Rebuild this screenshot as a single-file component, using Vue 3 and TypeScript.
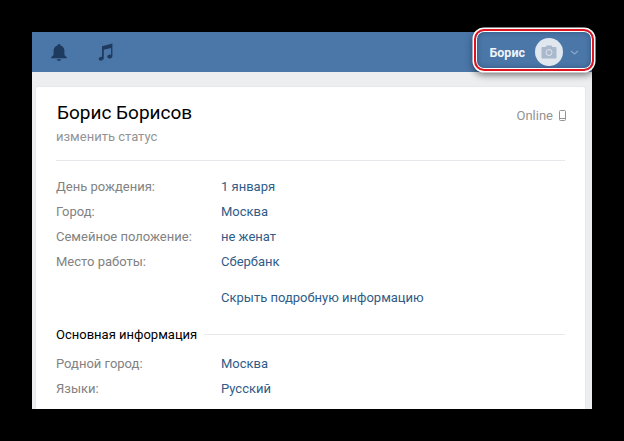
<script setup lang="ts">
const mainRows = [
  { label: 'День рождения:', value: '1 января' },
  { label: 'Город:', value: 'Москва' },
  { label: 'Семейное положение:', value: 'не женат' },
  { label: 'Место работы:', value: 'Сбербанк' },
]
const extraRows = [
  { label: 'Родной город:', value: 'Москва' },
  { label: 'Языки:', value: 'Русский' },
]
</script>

<template>
  <div class="page">
    <div class="window">
      <header class="topbar">
        <svg class="bell" viewBox="0 0 18 18" width="18" height="19">
          <path fill="#1f3a5f" d="M9 0.5c.9 0 1.5.6 1.5 1.4 2.6.6 3.9 2.8 3.9 5.4v3.200c0 1.300 1.100 2.300 2.300 3.100.5.4.3 1.100-.3 1.100H1.600c-.6 0-.8-.7-.3-1.100 1.200-.8 2.300-1.800 2.300-3.100V7.300c0-2.600 1.300-4.800 3.900-5.400C7.500 1.100 8.100.5 9 .5zM6.800 15.800h4.400c-.3 1-1.100 1.600-2.200 1.600s-1.900-.6-2.200-1.600z" />
        </svg>
        <svg class="note" viewBox="0 0 16 18" width="16" height="18">
          <path fill="#1f3a5f" d="M5 3.200 15.400.5v12.400c0 1.500-1.300 2.600-2.900 2.600-1.300 0-2.200-.7-2.200-1.700 0-1.200 1.200-2.200 2.800-2.200.4 0 .7 0 1 .1V5L6.800 6.700v8.300c0 1.500-1.300 2.600-2.900 2.600-1.300 0-2.200-.7-2.200-1.700 0-1.200 1.200-2.200 2.800-2.200.2 0 .4 0 .5.1z" />
        </svg>
        <div class="spacer"></div>
        <div class="user">
          <span class="user-name">Борис</span>
          <span class="avatar">
            <svg viewBox="0 0 16 14" width="16" height="14">
              <path fill="#a9b9cb" d="M1.500 2H4.500L5.600.5h4.800L11.500 2h3c.6 0 1 .4 1 1v9.500c0 .6-.4 1-1 1h-13c-.6 0-1-.4-1-1V3c0-.6.4-1 1-1z" />
              <circle cx="8" cy="7.500" r="3" fill="none" stroke="#dfe6ee" stroke-width="1" />
            </svg>
          </span>
          <svg class="chevron" viewBox="0 0 9 5" width="9" height="5">
            <path d="M1 1l3.500 3L8 1" fill="none" stroke="#8fa9c7" stroke-width="1.200" />
          </svg>
        </div>
      </header>
      <div class="content">
        <main class="card">
          <div class="head">
            <div>
              <h1 class="title">Борис Борисов</h1>
              <div class="status">изменить статус</div>
            </div>
            <div class="online">
              Online
              <svg viewBox="0 0 7 11" width="7" height="11">
                <rect x="0.500" y="0.500" width="6" height="10" rx="1" fill="none" stroke="#939393" />
                <path d="M1 8.500h5" stroke="#939393" />
              </svg>
            </div>
          </div>
          <div class="rows">
            <div v-for="row in mainRows" :key="row.label" class="row">
              <span class="label">{{ row.label }}</span>
              <span class="value">{{ row.value }}</span>
            </div>
          </div>
          <div class="toggle-row">
            <span class="label"></span>
            <span class="value">Скрыть подробную информацию</span>
          </div>
          <div class="section">
            <span class="section-title">Основная информация</span>
            <span class="section-line"></span>
          </div>
          <div class="rows">
            <div v-for="row in extraRows" :key="row.label" class="row">
              <span class="label">{{ row.label }}</span>
              <span class="value">{{ row.value }}</span>
            </div>
          </div>
        </main>
      </div>
    </div>
    <div class="highlight"></div>
  </div>
</template>

<style>
html, body { margin: 0; background: #000; }
</style>

<style scoped>
.page {
  position: relative;
  width: 624px;
  height: 441px;
  box-sizing: border-box;
  padding: 32px;
  background: #000;
  font-family: Roboto, "Open Sans", sans-serif;
  font-size: 13px;
  overflow: hidden;
}
.window {
  width: 560px;
  height: 377px;
  background: #edeef0;
  overflow: hidden;
}
.topbar {
  height: 40px;
  background: #4a76a8;
  display: flex;
  align-items: center;
  padding-left: 18px;
}
.note { margin-left: 29px; }
.spacer { flex: 1; }
.user {
  position: relative;
  z-index: 2;
  display: flex;
  align-items: center;
  padding-right: 13px;
}
.user-name {
  color: #f1f4f8;
  font-weight: 700;
  font-size: 12.500px;
}
.avatar {
  width: 28px;
  height: 28px;
  margin-left: 10px;
  border-radius: 50%;
  background: #e1e7ee;
  display: flex;
  align-items: center;
  justify-content: center;
}
.chevron { margin-left: 7px; }
.content { padding: 15px 7px 0 4px; }
.card {
  height: 322px;
  background: #fff;
  border-radius: 2px 2px 0 0;
  box-shadow: 0 1px 0 0 #dce1e6, 0 0 0 1px #e7e8ec;
  padding: 0 20px;
  overflow: hidden;
}
.head {
  display: flex;
  justify-content: space-between;
  height: 74px;
  box-sizing: border-box;
  border-bottom: 1px solid #e7e8ec;
  padding-top: 14px;
}
.title {
  margin: 0 0 0 1px;
  font-size: 19px;
  font-weight: 400;
  line-height: 24px;
  color: #000;
}
.status {
  margin-top: 3px;
  color: #939393;
  line-height: 18px;
}
.online {
  display: flex;
  align-items: center;
  gap: 6px;
  height: 18px;
  margin-top: 5px;
  margin-right: -1px;
  color: #939393;
}
.rows { display: flex; flex-direction: column; }
.head + .rows { margin-top: 13px; }
.row, .toggle-row {
  display: flex;
  height: 25px;
  align-items: center;
}
.label {
  width: 165px;
  color: #828282;
}
.value { color: #2f5c88; }
.toggle-row { margin-top: 11px; }
.section {
  display: flex;
  align-items: center;
  gap: 7px;
  margin-top: 12px;
  height: 25px;
  color: #000;
}
.section-line {
  flex: 1;
  height: 1px;
  background: #e7e8ec;
}
.section + .rows { margin-top: 4px; }
.highlight {
  position: absolute;
  z-index: 1;
  left: 474px;
  top: 29px;
  width: 120px;
  height: 42px;
  box-sizing: border-box;
  border: 2.500px solid #e0141f;
  border-radius: 10px;
  background: #4a76a8;
  box-shadow: 0 0 0 1.500px #fff, inset 0 0 0 1px #fff, inset 0 0 4px 2px rgba(20, 40, 70, 0.3), 0 3px 7px 1px rgba(0, 0, 0, 0.5);
}
</style>
